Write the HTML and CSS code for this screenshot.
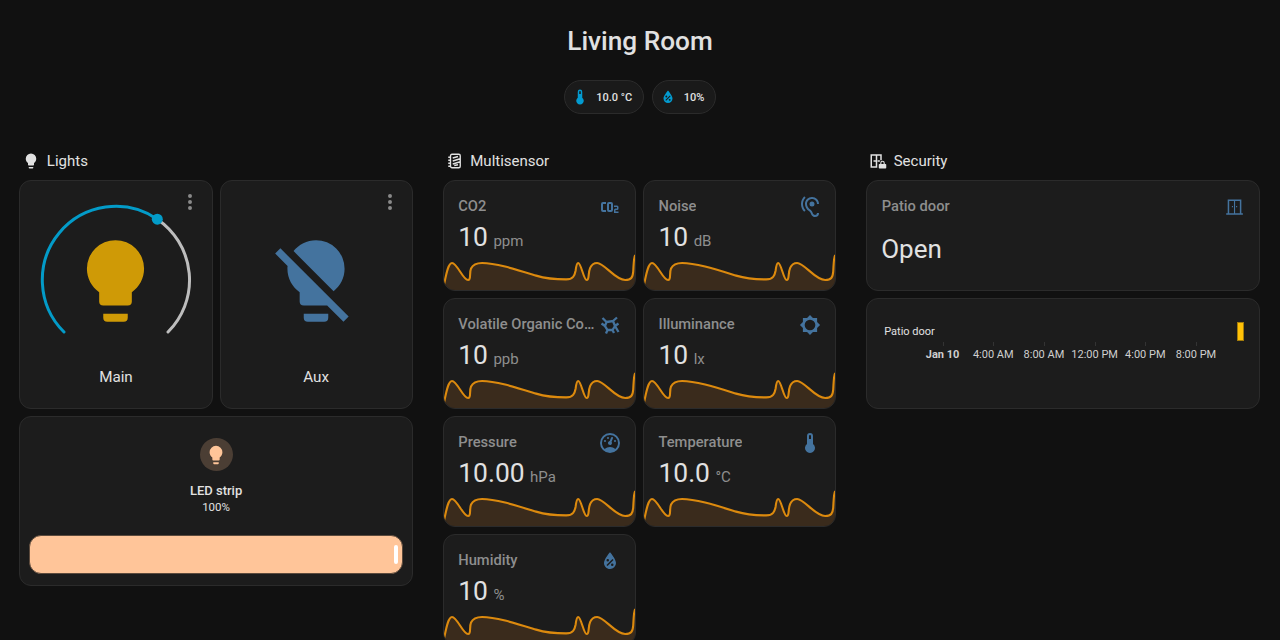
FILE: index.html
```html
<!DOCTYPE html>
<html lang="en">
<head>
  <meta charset="UTF-8" />
  <meta name="viewport" content="width=device-width, initial-scale=1.0"/>
  <title>Living Room</title>
  <link rel="stylesheet" href="styles.css">
</head>
<body>

  <!-- shared icons -->
  <svg class="defs" aria-hidden="true">
    <symbol id="i-bulb" viewBox="0 0 24 24"><path d="M12,2A7,7 0 0,0 5,9C5,11.38 6.19,13.47 8,14.74V17A1,1 0 0,0 9,18H15A1,1 0 0,0 16,17V14.74C17.81,13.47 19,11.38 19,9A7,7 0 0,0 12,2M9,21A1,1 0 0,0 10,22H14A1,1 0 0,0 15,21V20H9V21Z"/></symbol>
    <symbol id="i-bulb-off" viewBox="0 0 24 24"><path d="M12,2C9.76,2 7.78,3.05 6.5,4.68L16.31,14.5C17.94,13.21 19,11.24 19,9A7,7 0 0,0 12,2M3.28,4L2,5.27L5.04,8.3C5,8.53 5,8.76 5,9C5,11.38 6.19,13.47 8,14.74V17A1,1 0 0,0 9,18H14.73L18.73,22L20,20.72L3.28,4M9,20V21A1,1 0 0,0 10,22H14A1,1 0 0,0 15,21V20H9Z"/></symbol>
    <symbol id="i-dots" viewBox="0 0 24 24"><path d="M12,16A2,2 0 0,1 14,18A2,2 0 0,1 12,20A2,2 0 0,1 10,18A2,2 0 0,1 12,16M12,10A2,2 0 0,1 14,12A2,2 0 0,1 12,14A2,2 0 0,1 10,12A2,2 0 0,1 12,10M12,4A2,2 0 0,1 14,6A2,2 0 0,1 12,8A2,2 0 0,1 10,6A2,2 0 0,1 12,4Z"/></symbol>
    <symbol id="i-thermo" viewBox="0 0 24 24"><path d="M15 13V5A3 3 0 0 0 9 5V13A5 5 0 1 0 15 13M12 4A1 1 0 0 1 13 5V8H11V5A1 1 0 0 1 12 4Z"/></symbol>
    <symbol id="i-water" viewBox="0 0 24 24"><path d="M12,3.25C12,3.25 6,10 6,14C6,17.32 8.69,20 12,20A6,6 0 0,0 18,14C18,10 12,3.25 12,3.25M14.47,9.97L15.53,11.03L9.53,17.03L8.47,15.97M9.75,10A1.25,1.25 0 0,1 11,11.25A1.25,1.25 0 0,1 9.75,12.5A1.25,1.25 0 0,1 8.5,11.25A1.25,1.25 0 0,1 9.75,10M14.25,14.5A1.25,1.25 0 0,1 15.5,15.75A1.25,1.25 0 0,1 14.25,17A1.25,1.25 0 0,1 13,15.75A1.25,1.25 0 0,1 14.25,14.5Z" fill-rule="evenodd"/></symbol>
    <symbol id="i-co2" viewBox="0 0 24 24"><path d="M5,7A2,2 0 0,0 3,9V15A2,2 0 0,0 5,17H8V15H5V9H8V7H5M11,7A2,2 0 0,0 9,9V15A2,2 0 0,0 11,17H13A2,2 0 0,0 15,15V9A2,2 0 0,0 13,7H11M11,9H13V15H11V9M16,10.5V12H19V13.5H17.5A1.5,1.5 0 0,0 16,15V18H20.5V16.5H17.5V15H19A1.5,1.5 0 0,0 20.5,13.5V12A1.5,1.5 0 0,0 19,10.5H16Z"/></symbol>
    <symbol id="i-ear" viewBox="0 0 24 24"><path d="M17,20C16.71,20 16.44,19.94 16.24,19.85C15.53,19.48 15.03,18.97 14.53,17.47C14,15.91 13.06,15.18 12.15,14.47C11.37,13.86 10.56,13.23 9.86,11.96C9.34,11 9,9.95 9,9C9,6.2 11.2,4 14,4C16.8,4 19,6.2 19,9H21C21,5.07 17.93,2 14,2C10.07,2 7,5.07 7,9C7,10.26 7.38,11.65 8.07,12.9C8.98,14.55 10.05,15.38 10.92,16.06C11.73,16.69 12.31,17.14 12.63,18.1C13.23,19.92 14,20.94 15.37,21.65C15.87,21.88 16.42,22 17,22A4,4 0 0,0 21,18H19A2,2 0 0,1 17,20M7.64,2.64L6.22,1.22C4.23,3.21 3,5.96 3,9C3,12.04 4.23,14.79 6.22,16.78L7.63,15.37C6,13.74 5,11.5 5,9C5,6.5 6,4.26 7.64,2.64M11.5,9A2.5,2.5 0 0,0 14,11.5A2.5,2.5 0 0,0 16.5,9A2.5,2.5 0 0,0 14,6.5A2.5,2.5 0 0,0 11.5,9Z"/></symbol>
    <symbol id="i-molecule" viewBox="0 0 24 24"><path d="M8.5,9L15,8L17,13L14.500,17H9.500L7,13ZM8.5,9L4.500,5M15,8L19,4.500M17,13L20.500,10.500M17,13L20.500,19M9.500,17L8,20.500M14.500,17L16,20M7,13L3.500,10.500" fill="none" stroke="currentColor" stroke-width="2.300"/></symbol>
    <symbol id="i-sun" viewBox="-1.500 -1.500 27 27"><path fill-rule="evenodd" d="M12,18A6,6 0 0,1 6,12A6,6 0 0,1 12,6A6,6 0 0,1 18,12A6,6 0 0,1 12,18M20,15.31L23.31,12L20,8.69V4H15.31L12,0.69L8.69,4H4V8.69L0.69,12L4,15.31V20H8.69L12,23.31L15.31,20H20V15.31Z"/></symbol>
    <symbol id="i-gauge" viewBox="0 0 24 24"><path d="M12,2A10,10 0 0,0 2,12A10,10 0 0,0 12,22A10,10 0 0,0 22,12A10,10 0 0,0 12,2M12,4A8,8 0 0,1 20,12C20,14.4 19,16.5 17.3,18C15.9,16.7 14,16 12,16C10,16 8.2,16.7 6.7,18C5,16.5 4,14.4 4,12A8,8 0 0,1 12,4M14,5.89C13.62,5.9 13.26,6.15 13.1,6.54L11.81,9.77L11.71,10C11,10.13 10.41,10.6 10.14,11.26C9.73,12.29 10.23,13.45 11.26,13.86C12.29,14.27 13.45,13.77 13.86,12.74C14.12,12.08 14,11.32 13.57,10.76L13.67,10.5L14.96,7.29L14.97,7.26C15.17,6.75 14.92,6.17 14.41,5.96C14.28,5.91 14.15,5.89 14,5.89M10,6A1,1 0 0,0 9,7A1,1 0 0,0 10,8A1,1 0 0,0 11,7A1,1 0 0,0 10,6M7,9A1,1 0 0,0 6,10A1,1 0 0,0 7,11A1,1 0 0,0 8,10A1,1 0 0,0 7,9M17,9A1,1 0 0,0 16,10A1,1 0 0,0 17,11A1,1 0 0,0 18,10A1,1 0 0,0 17,9Z"/></symbol>
    <symbol id="i-door" viewBox="-4.500 -3 31.600 31.600"><path fill-rule="evenodd" d="M3,21V3H21V21H23V23H1V21H3ZM5,5V21H11.250V5H5ZM12.750,5V21H19V5H12.750ZM8.500,11.500H10V13H8.500ZM14,11.500H15.500V13H14Z"/></symbol>
    <symbol id="i-sensors" viewBox="0 0 24 24"><path d="M6,5a2,2 0 0,1 2,-2H17a2,2 0 0,1 2,2V19a2,2 0 0,1 -2,2H8a2,2 0 0,1 -2,-2ZM3,7H6M3,11H6M3,15H6M3,19H6M9,8L16,6M9,12L19,9M9,16L19,13M11,18L16,17" fill="none" stroke="currentColor" stroke-width="1.800"/></symbol>
    <symbol id="i-security" viewBox="0 0 24 24"><path fill-rule="evenodd" d="M2,21V3H17V11H15V5H11V21H2ZM4,5V19H9V13H6V11H9V5H4ZM11.5,11H14.5V13H11.5Z"/><path d="M15,14.5a3,3 0 0,1 6,0V16h1a1,1 0 0,1 1,1v4a1,1 0 0,1 -1,1H14a1,1 0 0,1 -1,-1V17a1,1 0 0,1 1,-1h1ZM16.5,16h3v-1.500a1.500,1.500 0 0,0 -3,0Z" fill-rule="evenodd"/></symbol>
    <symbol id="spark" viewBox="0 0 191 36" preserveAspectRatio="none">
      <path class="spark-fill" d="M0,31C2,22 4,9.7 8,9.7C13,9.7 19,26.3 24,26.3C27.5,26.300 25,19 27,15C29,11 33,9.700 38,9.700C52,9.700 72,16 92,22C104,25.500 112,25.700 122,25.700C129,25.700 130.500,22 131.500,17C132,13 132.500,9.700 134,9.700C137,9.700 139.500,26.300 142.500,26.300C145.500,26.300 143.500,20 146,14.500C147.500,11 150,9.700 153,9.700C160,9.700 171,26.300 181,26.300C187,26.300 188.500,24 189,18C189.500,10 189.500,4 191,2V36H0Z"/>
      <path class="spark-line" d="M0,31C2,22 4,9.7 8,9.7C13,9.7 19,26.3 24,26.3C27.5,26.300 25,19 27,15C29,11 33,9.700 38,9.700C52,9.700 72,16 92,22C104,25.500 112,25.700 122,25.700C129,25.700 130.500,22 131.500,17C132,13 132.500,9.700 134,9.700C137,9.700 139.500,26.300 142.500,26.300C145.500,26.300 143.500,20 146,14.500C147.500,11 150,9.700 153,9.700C160,9.700 171,26.300 181,26.300C187,26.300 188.500,24 189,18C189.500,10 189.500,4 191,2"/>
    </symbol>
  </svg>

  <header class="top">
    <h1>Living Room</h1>
    <div class="chips">
      <div class="chip"><svg class="chip-icon"><use href="#i-thermo"/></svg><span>10.0 °C</span></div>
      <div class="chip"><svg class="chip-icon"><use href="#i-water"/></svg><span>10%</span></div>
    </div>
  </header>

  <main class="columns">

    <section>
      <h2 class="section-title"><svg class="section-icon"><use href="#i-bulb"/></svg>Lights</h2>
      <div class="grid lights">
        <div class="card light">
          <svg class="menu"><use href="#i-dots"/></svg>
          <svg class="dial" viewBox="0 0 160 160">
            <path class="dial-track" d="M132,132A73.500,73.500 0 0 0 121.300,19.200"/>
            <path class="dial-value" d="M28,132A73.500,73.500 0 0 1 121.300,19.200"/>
            <circle class="dial-knob" cx="121.300" cy="19.200" r="5.500"/>
            <use href="#i-bulb" class="bulb-on" x="30.500" y="32" width="98" height="98"/>
          </svg>
          <div class="light-name">Main</div>
        </div>
        <div class="card light">
          <svg class="menu"><use href="#i-dots"/></svg>
          <svg class="dial" viewBox="0 0 160 160">
            <use href="#i-bulb-off" class="bulb-off" x="31" y="32" width="98" height="98"/>
          </svg>
          <div class="light-name">Aux</div>
        </div>
        <div class="card strip">
          <div class="strip-icon"><svg><use href="#i-bulb"/></svg></div>
          <div class="strip-name">LED strip</div>
          <div class="strip-state">100%</div>
          <div class="strip-bar"><span class="strip-handle"></span></div>
        </div>
      </div>
    </section>

    <section>
      <h2 class="section-title"><svg class="section-icon"><use href="#i-sensors"/></svg>Multisensor</h2>
      <div class="grid">
        <div class="card sensor">
          <div class="sensor-head"><span class="sensor-name">CO2</span><svg class="sensor-icon"><use href="#i-co2"/></svg></div>
          <div class="sensor-value">10<span class="unit">ppm</span></div>
          <svg class="spark"><use href="#spark"/></svg>
        </div>
        <div class="card sensor">
          <div class="sensor-head"><span class="sensor-name">Noise</span><svg class="sensor-icon"><use href="#i-ear"/></svg></div>
          <div class="sensor-value">10<span class="unit">dB</span></div>
          <svg class="spark"><use href="#spark"/></svg>
        </div>
        <div class="card sensor">
          <div class="sensor-head"><span class="sensor-name">Volatile Organic Compounds</span><svg class="sensor-icon"><use href="#i-molecule"/></svg></div>
          <div class="sensor-value">10<span class="unit">ppb</span></div>
          <svg class="spark"><use href="#spark"/></svg>
        </div>
        <div class="card sensor">
          <div class="sensor-head"><span class="sensor-name">Illuminance</span><svg class="sensor-icon"><use href="#i-sun"/></svg></div>
          <div class="sensor-value">10<span class="unit">lx</span></div>
          <svg class="spark"><use href="#spark"/></svg>
        </div>
        <div class="card sensor">
          <div class="sensor-head"><span class="sensor-name">Pressure</span><svg class="sensor-icon"><use href="#i-gauge"/></svg></div>
          <div class="sensor-value">10.00<span class="unit">hPa</span></div>
          <svg class="spark"><use href="#spark"/></svg>
        </div>
        <div class="card sensor">
          <div class="sensor-head"><span class="sensor-name">Temperature</span><svg class="sensor-icon"><use href="#i-thermo"/></svg></div>
          <div class="sensor-value">10.0<span class="unit">°C</span></div>
          <svg class="spark"><use href="#spark"/></svg>
        </div>
        <div class="card sensor">
          <div class="sensor-head"><span class="sensor-name">Humidity</span><svg class="sensor-icon"><use href="#i-water"/></svg></div>
          <div class="sensor-value">10<span class="unit">%</span></div>
          <svg class="spark"><use href="#spark"/></svg>
        </div>
      </div>
    </section>

    <section>
      <h2 class="section-title"><svg class="section-icon"><use href="#i-security"/></svg>Security</h2>
      <div class="stack">
        <div class="card door">
          <div class="sensor-head"><span class="sensor-name">Patio door</span><svg class="sensor-icon"><use href="#i-door"/></svg></div>
          <div class="door-state">Open</div>
        </div>
        <div class="card timeline">
          <div class="timeline-row">
            <span class="timeline-label">Patio door</span>
            <span class="timeline-mark"></span>
          </div>
          <div class="timeline-axis">
            <span class="tick strong">Jan 10</span>
            <span class="tick">4:00 AM</span>
            <span class="tick">8:00 AM</span>
            <span class="tick">12:00 PM</span>
            <span class="tick">4:00 PM</span>
            <span class="tick">8:00 PM</span>
          </div>
        </div>
      </div>
    </section>

  </main>

</body>
</html>
```

FILE: styles.css
```css
html, body {
  overflow: hidden;
}
body {
  margin: 0;
  background: #111111;
  color: #e1e1e1;
  font-family: Roboto, "Liberation Sans", sans-serif;
}
.defs {
  display: none;
}
svg {
  fill: currentColor;
}

.top {
  padding-top: 25px;
  text-align: center;
}
h1 {
  margin: 0 0 23px;
  font-size: 26.200px;
  line-height: 32px;
  font-weight: 500;
}
.chips {
  display: flex;
  justify-content: center;
  gap: 8px;
}
.chip {
  display: flex;
  align-items: center;
  gap: 7px;
  height: 34px;
  box-sizing: border-box;
  padding: 0 10.500px 0 6px;
  border: 1px solid #2b2b2b;
  border-radius: 17px;
  background: #1a1a1a;
  font-size: 11px;
  font-weight: 500;
}
.chip-icon {
  width: 18px;
  height: 18px;
  color: #039bd0;
}

.columns {
  display: grid;
  grid-template-columns: repeat(3, 393.44px);
  column-gap: 30px;
  padding: 36px 0 0 19.33px;
}
.section-title {
  display: flex;
  align-items: center;
  gap: 6.500px;
  height: 18px;
  margin: 0 0 10px;
  padding: 2px 0 0 3px;
  font-size: 15px;
  line-height: 18px;
  font-weight: 400;
}
.section-icon {
  width: 18px;
  height: 18px;
}
.grid {
  display: grid;
  grid-template-columns: 1fr 1fr;
  grid-auto-rows: 111px;
  gap: 7px;
}
.lights {
  grid-template-rows: 111px 111px 170px;
}
.stack {
  display: grid;
  grid-auto-rows: 111px;
  gap: 7px;
}

.card {
  position: relative;
  box-sizing: border-box;
  border: 1px solid #2b2b2b;
  border-radius: 12px;
  background: #1c1c1c;
  overflow: hidden;
}

.light {
  grid-row: span 2;
  display: flex;
  flex-direction: column;
  align-items: center;
}
.menu {
  position: absolute;
  top: 9px;
  right: 10px;
  width: 24px;
  height: 24px;
  color: #8a8a8a;
}
.dial {
  width: 160px;
  height: 160px;
  margin-top: 19px;
  flex: none;
}
.dial-track,
.dial-value {
  fill: none;
  stroke-width: 3;
  stroke-linecap: round;
}
.dial-track {
  stroke: #bdbdbd;
}
.dial-value {
  stroke: #039bc8;
}
.dial-knob {
  fill: #039bc8;
}
.bulb-on {
  color: #cf9a06;
}
.bulb-off {
  color: #44739e;
}
.light-name {
  margin-top: 7px;
  font-size: 15.200px;
  line-height: 20px;
}

.strip {
  grid-column: span 2;
  display: flex;
  flex-direction: column;
  align-items: center;
  padding: 21px 9px 0;
}
.strip-icon {
  display: flex;
  align-items: center;
  justify-content: center;
  width: 33px;
  height: 33px;
  border-radius: 50%;
  background: #4b3e34;
  color: #ffc599;
}
.strip-icon svg {
  width: 22px;
  height: 22px;
}
.strip-name {
  margin-top: 12px;
  font-size: 13px;
  line-height: 16px;
  font-weight: 500;
}
.strip-state {
  font-size: 11.500px;
  line-height: 17px;
}
.strip-bar {
  display: flex;
  align-items: center;
  justify-content: flex-end;
  align-self: stretch;
  height: 39px;
  box-sizing: border-box;
  margin-top: 19px;
  padding-right: 3.700px;
  border: 1px solid #5c4a3c;
  border-radius: 12px;
  background: #ffc599;
}
.strip-handle {
  width: 4.500px;
  height: 19px;
  border-radius: 2px;
  background: #ffffff;
}

.sensor {
  display: flex;
  flex-direction: column;
}
.sensor-head {
  display: flex;
  align-items: flex-start;
  justify-content: space-between;
  padding: 14px 13px 0 14.500px;
}
.sensor-name {
  overflow: hidden;
  white-space: nowrap;
  text-overflow: ellipsis;
  font-size: 14.700px;
  line-height: 22px;
  font-weight: 500;
  color: #8e8e8e;
}
.sensor-icon {
  flex: none;
  width: 24px;
  height: 24px;
  margin-left: 2px;
  color: #44739e;
}
.sensor-value {
  padding-left: 14.500px;
  margin-top: 2px;
  font-size: 26.400px;
  line-height: 32px;
}
.unit {
  margin-left: 5.500px;
  font-size: 15px;
  line-height: 1;
  color: #8e8e8e;
}
.spark {
  display: block;
  width: 100%;
  height: 37px;
  margin-top: auto;
  flex: none;
}
.spark-fill {
  fill: #3a2b1c;
}
.spark-line {
  fill: none;
  stroke: #dc8a0e;
  stroke-width: 2.100;
}

.door {
  display: flex;
  flex-direction: column;
}
.door-state {
  padding-left: 14px;
  margin-top: 14px;
  font-size: 26px;
  line-height: 32px;
}

.timeline {
  padding: 23px 15px 0 17px;
  font-size: 11px;
}
.timeline-row {
  display: flex;
  justify-content: space-between;
  align-items: center;
  height: 19px;
}
.timeline-mark {
  width: 7px;
  height: 19px;
  box-sizing: border-box;
  border: 1px solid #a37c0b;
  background: #ffc107;
}
.timeline-axis {
  display: grid;
  grid-template-columns: repeat(6, 50.700px);
  margin: 1px 0 0 33px;
  text-align: center;
  color: #cfcfcf;
}
.tick {
  white-space: nowrap;
  padding-top: 6px;
  line-height: 14px;
  position: relative;
}
.tick::before {
  content: "";
  position: absolute;
  top: 0;
  left: 50%;
  width: 1px;
  height: 4px;
  background: #333333;
}
.strong {
  font-weight: 700;
}
```
